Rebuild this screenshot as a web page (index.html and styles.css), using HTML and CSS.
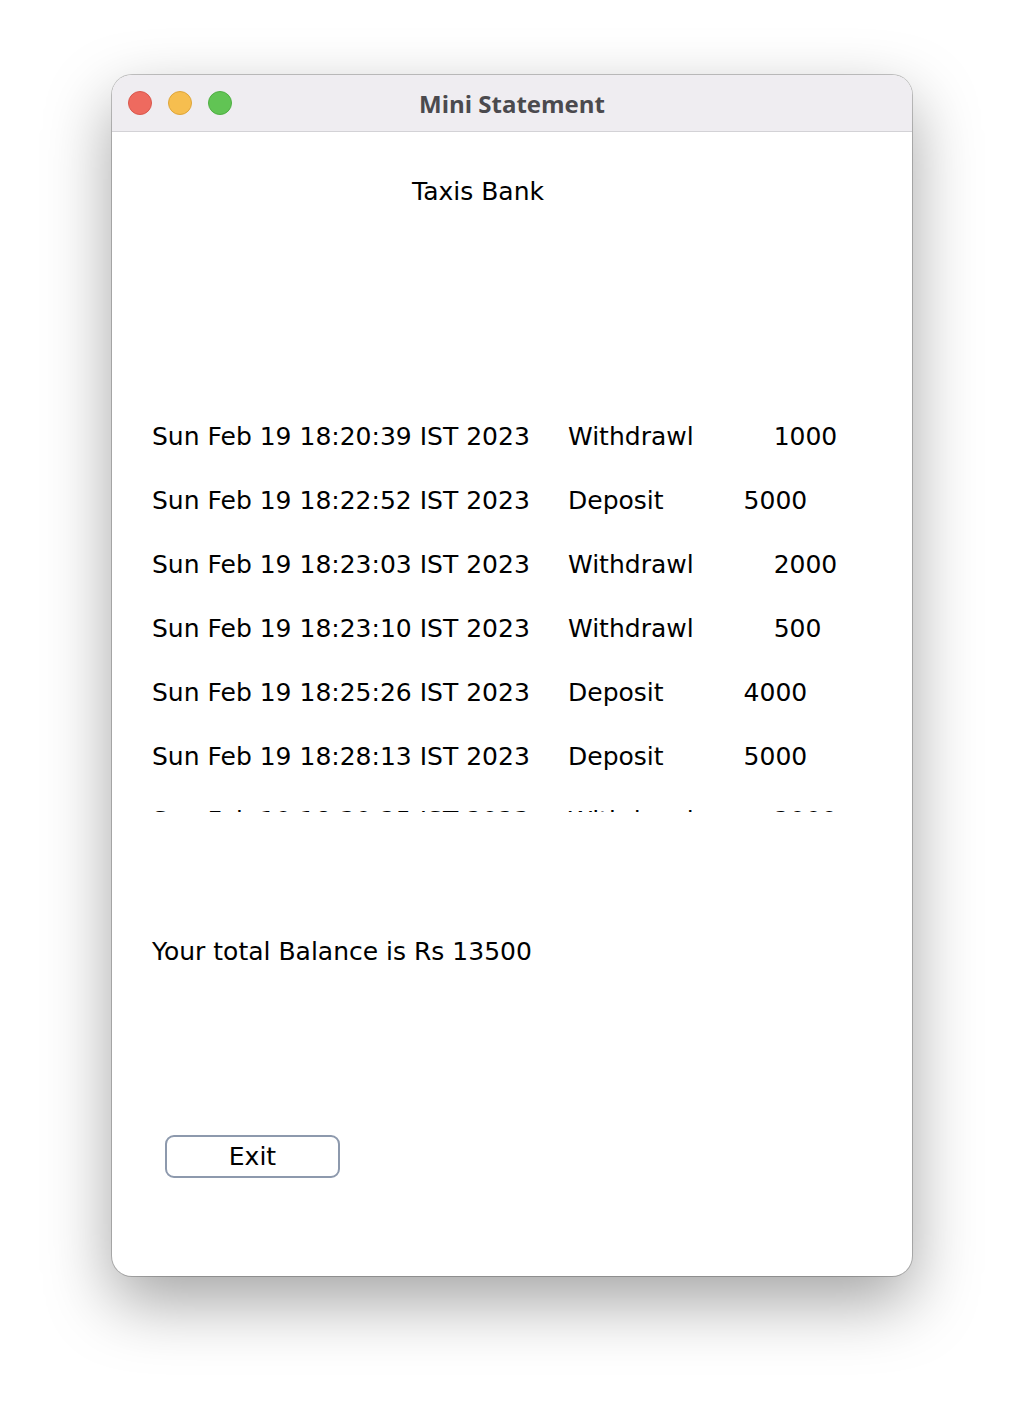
FILE: index.html
```html
<!DOCTYPE html>
<html>
<head>
<meta charset="utf-8">
<title>Mini Statement</title>
<link rel="stylesheet" href="styles.css">
</head>
<body>
<div class="window">
  <div class="titlebar">
    <div class="lights">
      <span class="light red"></span>
      <span class="light yellow"></span>
      <span class="light green"></span>
    </div>
    <div class="title">Mini Statement</div>
  </div>
  <div class="content">
    <div class="bank">Taxis Bank</div>
    <div class="list">
      <div class="row"><span class="date">Sun Feb 19 18:20:39 IST 2023</span><span class="type">Withdrawl</span><span class="amt">1000</span></div>
      <div class="row"><span class="date">Sun Feb 19 18:22:52 IST 2023</span><span class="type">Deposit</span><span class="amt">5000</span></div>
      <div class="row"><span class="date">Sun Feb 19 18:23:03 IST 2023</span><span class="type">Withdrawl</span><span class="amt">2000</span></div>
      <div class="row"><span class="date">Sun Feb 19 18:23:10 IST 2023</span><span class="type">Withdrawl</span><span class="amt">500</span></div>
      <div class="row"><span class="date">Sun Feb 19 18:25:26 IST 2023</span><span class="type">Deposit</span><span class="amt">4000</span></div>
      <div class="row"><span class="date">Sun Feb 19 18:28:13 IST 2023</span><span class="type">Deposit</span><span class="amt">5000</span></div>
      <div class="row"><span class="date">Sun Feb 19 18:30:25 IST 2023</span><span class="type">Withdrawl</span><span class="amt">2000</span></div>
    </div>
    <div class="balance">Your total Balance is Rs 13500</div>
    <div class="actions"><button class="exit">Exit</button></div>
  </div>
</div>
</body>
</html>
```

FILE: styles.css
```css
html, body {
  margin: 0;
  padding: 0;
  background: #ffffff;
}

body {
  width: 1024px;
  height: 1424px;
  overflow: hidden;
  padding-top: 75px;
  box-sizing: border-box;
}

.window {
  margin-left: 112px;
  width: 800px;
  height: 1201px;
  border-radius: 20px;
  background: #ffffff;
  box-shadow: 0 0 0 1px rgba(0, 0, 0, 0.22), 0 26px 66px rgba(0, 0, 0, 0.36);
  overflow: hidden;
  display: flex;
  flex-direction: column;
}

.titlebar {
  height: 56px;
  flex: 0 0 56px;
  background: #efedf1;
  border-bottom: 1px solid #d3d2d6;
  display: flex;
  align-items: center;
  position: relative;
}

.lights {
  display: flex;
  gap: 16px;
  padding-left: 16px;
}

.light {
  width: 24px;
  height: 24px;
  border-radius: 50%;
  box-sizing: border-box;
}

.red { background: #ee6a5f; border: 1px solid #d9574d; }
.yellow { background: #f6be4f; border: 1px solid #dea53a; }
.green { background: #61c454; border: 1px solid #4fae43; }

.title {
  position: absolute;
  left: 0;
  right: 0;
  top: 0;
  bottom: 0;
  display: flex;
  align-items: center;
  justify-content: center;
  font-family: "Open Sans", "Inter", sans-serif;
  font-weight: 700;
  font-size: 24px;
  color: #4b4a4e;
  pointer-events: none;
}

.content {
  flex: 1;
  font-family: "DejaVu Sans", "Liberation Sans", sans-serif;
  font-size: 25px;
  color: #000000;
}

.bank {
  margin-top: 45px;
  padding-left: 300px;
  line-height: 30px;
}

.list {
  margin-top: 198px;
  height: 407px;
  overflow: hidden;
  padding-left: 40px;
}

.row {
  display: flex;
  height: 64px;
  line-height: 64px;
  white-space: nowrap;
}

.date {
  width: 416px;
  flex: 0 0 416px;
}

.amt {
  margin-left: 80px;
}

.balance {
  margin-top: 125px;
  padding-left: 40px;
  line-height: 30px;
}

.actions {
  margin-top: 168px;
  padding-left: 53px;
}

.exit {
  width: 175px;
  height: 43px;
  border: 2px solid #8d99ad;
  border-radius: 9px;
  background: #ffffff;
  font-family: "DejaVu Sans", "Liberation Sans", sans-serif;
  font-size: 25px;
  color: #000000;
  padding: 0;
  line-height: 38px;
}
```
